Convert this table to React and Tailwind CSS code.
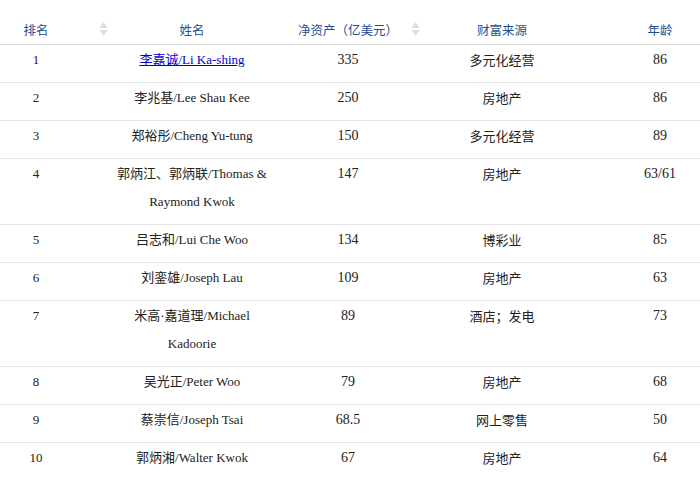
import React from 'react';

const rows = [
  { rank: '1', name: ['李嘉诚/Li Ka-shing'], link: true, worth: '335', src: '多元化经营', age: '86' },
  { rank: '2', name: ['李兆基/Lee Shau Kee'], worth: '250', src: '房地产', age: '86' },
  { rank: '3', name: ['郑裕彤/Cheng Yu-tung'], worth: '150', src: '多元化经营', age: '89' },
  { rank: '4', name: ['郭炳江、郭炳联/Thomas &', 'Raymond Kwok'], worth: '147', src: '房地产', age: '63/61' },
  { rank: '5', name: ['吕志和/Lui Che Woo'], worth: '134', src: '博彩业', age: '85' },
  { rank: '6', name: ['刘銮雄/Joseph Lau'], worth: '109', src: '房地产', age: '63' },
  { rank: '7', name: ['米高·嘉道理/Michael', 'Kadoorie'], worth: '89', src: '酒店；发电', age: '73' },
  { rank: '8', name: ['吴光正/Peter Woo'], worth: '79', src: '房地产', age: '68' },
  { rank: '9', name: ['蔡崇信/Joseph Tsai'], worth: '68.5', src: '网上零售', age: '50' },
  { rank: '10', name: ['郭炳湘/Walter Kwok'], worth: '67', src: '房地产', age: '64' },
];

const SortIcon = () => (
  <svg className="absolute right-[4px] top-[22px]" width="9" height="14" viewBox="0 0 9 14">
    <path d="M4.5 0 L8.5 6 L0.5 6 Z" fill="#dedede" />
    <path d="M4.5 14 L8.5 8 L0.5 8 Z" fill="#dedede" />
  </svg>
);

const th = "relative pt-[18px] pb-[2px] leading-[24px] font-normal text-center";
const td = "pt-[1px] pb-[8px] leading-[28px] text-center align-top";

export default function App() {
  return (
    <div className="w-[700px] h-[479px] overflow-hidden bg-white">
      <table className="w-[700px] table-fixed border-collapse">
        <colgroup>
          <col className="w-[112px]" />
          <col className="w-[160px]" />
          <col className="w-[152px]" />
          <col className="w-[156px]" />
          <col className="w-[120px]" />
        </colgroup>
        <thead>
          <tr className="border-b border-[#dcdcdc] text-[12.5px] text-[#1d4f8f] font-['Noto_Sans_CJK_SC',sans-serif]">
            <th className={th + " pr-[40px]"}>排名<SortIcon /></th>
            <th className={th}>姓名</th>
            <th className={th}>净资产（亿美元）<SortIcon /></th>
            <th className={th}>财富来源</th>
            <th className={th + " pl-[40px]"}>年龄</th>
          </tr>
        </thead>
        <tbody className="text-[13px] text-[#222] font-['Liberation_Serif','Noto_Sans_CJK_SC',serif]">
          {rows.map((r) => (
            <tr key={r.rank} className="border-b border-[#e6e6e6]">
              <td className={td + " pr-[40px]"}>{r.rank}</td>
              <td className={td}>
                {r.name.map((n, i) => (
                  <div key={i}>
                    {r.link ? <a href="#" className="text-[#0000cc] underline">{n}</a> : n}
                  </div>
                ))}
              </td>
              <td className={td + " text-[14px]"}>{r.worth}</td>
              <td className={td + " font-['Noto_Sans_CJK_SC',sans-serif]"}>{r.src}</td>
              <td className={td + " pl-[40px] text-[14px]"}>{r.age}</td>
            </tr>
          ))}
        </tbody>
      </table>
    </div>
  );
}
